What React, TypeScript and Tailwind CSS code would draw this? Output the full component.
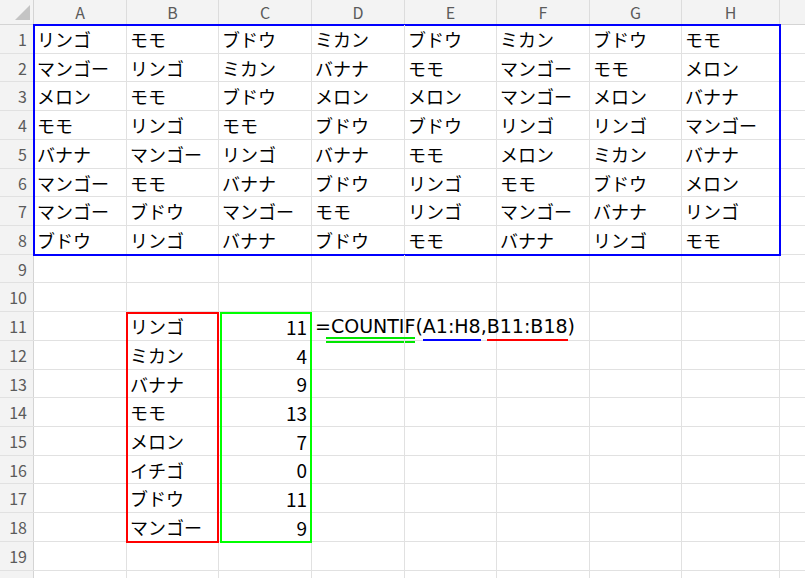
import React from 'react';

const cols = [
  { key: 'A', w: 'w-[93px]' },
  { key: 'B', w: 'w-[92px]' },
  { key: 'C', w: 'w-[93px]' },
  { key: 'D', w: 'w-[93px]' },
  { key: 'E', w: 'w-[92px]' },
  { key: 'F', w: 'w-[93px]' },
  { key: 'G', w: 'w-[92px]' },
  { key: 'H', w: 'w-[98px]' },
];

// 行の高さ（Excelの28.7px相当を整数で）
const rowHeights = [29, 28, 29, 29, 29, 28, 29, 29, 28, 29, 29, 29, 28, 29, 29, 28, 29, 29, 29];
const heightClass: Record<number, string> = { 28: 'h-[28px]', 29: 'h-[29px]' };

const fruits: string[][] = [
  ['リンゴ', 'モモ', 'ブドウ', 'ミカン', 'ブドウ', 'ミカン', 'ブドウ', 'モモ'],
  ['マンゴー', 'リンゴ', 'ミカン', 'バナナ', 'モモ', 'マンゴー', 'モモ', 'メロン'],
  ['メロン', 'モモ', 'ブドウ', 'メロン', 'メロン', 'マンゴー', 'メロン', 'バナナ'],
  ['モモ', 'リンゴ', 'モモ', 'ブドウ', 'ブドウ', 'リンゴ', 'リンゴ', 'マンゴー'],
  ['バナナ', 'マンゴー', 'リンゴ', 'バナナ', 'モモ', 'メロン', 'ミカン', 'バナナ'],
  ['マンゴー', 'モモ', 'バナナ', 'ブドウ', 'リンゴ', 'モモ', 'ブドウ', 'メロン'],
  ['マンゴー', 'ブドウ', 'マンゴー', 'モモ', 'リンゴ', 'マンゴー', 'バナナ', 'リンゴ'],
  ['ブドウ', 'リンゴ', 'バナナ', 'ブドウ', 'モモ', 'バナナ', 'リンゴ', 'モモ'],
];

const counts: [string, number][] = [
  ['リンゴ', 11],
  ['ミカン', 4],
  ['バナナ', 9],
  ['モモ', 13],
  ['メロン', 7],
  ['イチゴ', 0],
  ['ブドウ', 11],
  ['マンゴー', 9],
];

// 編集中の数式（参照範囲ごとに色付きの下線）
const Formula = () => (
  <span
    className="whitespace-nowrap text-[19px]"
    style={{ fontFamily: '"DejaVu Sans", "Noto Sans CJK JP", sans-serif' }}
  >
    =
    <span className="relative">
      COUNTIF
      <span className="absolute left-[-5px] right-0 bottom-[-6px] h-[6px] border-y-2 border-[#00e600]" />
    </span>
    (
    <span className="relative">
      A1:H8
      <span className="absolute left-0 right-0 bottom-[-4px] h-[2px] bg-[#0000ff]" />
    </span>
    ,
    <span className="relative">
      B11:B18
      <span className="absolute left-0 right-0 bottom-[-4px] h-[2px] bg-[#ff0000]" />
    </span>
    )
  </span>
);

function cellContent(row: number, col: number): { text?: React.ReactNode; align?: 'right' } {
  if (row <= 8) return { text: fruits[row - 1][col] };
  if (row >= 11 && row <= 18) {
    const [name, n] = counts[row - 11];
    if (col === 1) return { text: name };
    if (col === 2) return { text: n, align: 'right' };
    if (col === 3 && row === 11) return { text: <Formula /> };
  }
  return {};
}

export default function App() {
  return (
    <div
      className="relative w-[805px] h-[578px] overflow-hidden bg-white text-black"
      style={{ fontFamily: '"Noto Sans CJK JP", "Noto Sans", sans-serif' }}
    >
      {/* 列見出し */}
      <div className="flex h-[25px] bg-[#f3f3f3] border-b border-[#d4d4d4] text-[16px] text-[#5b5b5b]">
        <div className="w-[34px] shrink-0 border-r border-[#d4d4d4] flex items-end justify-end pr-[3px] pb-[4px]">
          <svg width="15" height="15" viewBox="0 0 15 15">
            <polygon points="15,0 15,15 0,15" fill="#c4c4c4" />
          </svg>
        </div>
        {cols.map((c) => (
          <div key={c.key} className={`${c.w} shrink-0 border-r border-[#dcdcdc] flex items-center justify-center leading-none`}>
            {c.key}
          </div>
        ))}
        <div className="flex-1" />
      </div>

      {/* 行 */}
      {rowHeights.map((h, i) => {
        const row = i + 1;
        return (
          <div key={row} className={`flex ${heightClass[h]} border-b border-[#e1e1e1]`}>
            <div className="w-[34px] shrink-0 bg-[#f3f3f3] border-r border-[#d4d4d4] flex items-center justify-end pr-[6px] text-[16px] text-[#5b5b5b] leading-none">
              {row}
            </div>
            {cols.map((c, ci) => {
              const cell = cellContent(row, ci);
              return (
                <div
                  key={c.key}
                  className={`${c.w} shrink-0 border-r border-[#e1e1e1] flex items-center text-[18px] leading-none whitespace-nowrap ${
                    cell.align === 'right' ? 'justify-end pr-[4px] text-[19px]' : 'pl-[3px]'
                  } ${ci === 3 ? 'overflow-visible relative z-10' : ''}`}
                >
                  {cell.text}
                </div>
              );
            })}
            <div className="flex-1" />
          </div>
        );
      })}

      {/* 20行目（見切れ） */}
      <div className="flex h-[29px]">
        <div className="w-[34px] shrink-0 bg-[#f3f3f3] border-r border-[#d4d4d4]" />
        {cols.map((c) => (
          <div key={c.key} className={`${c.w} shrink-0 border-r border-[#e1e1e1]`} />
        ))}
      </div>

      {/* 参照範囲の枠 */}
      <div className="absolute left-[33px] top-[24px] w-[748px] h-[232px] border-2 border-[#0000ff] pointer-events-none" />
      <div className="absolute left-[126px] top-[312px] w-[93px] h-[231px] border-2 border-[#ff0000] pointer-events-none" />
      <div className="absolute left-[220px] top-[312px] w-[92px] h-[231px] border-2 border-[#00ff00] pointer-events-none" />
    </div>
  );
}
